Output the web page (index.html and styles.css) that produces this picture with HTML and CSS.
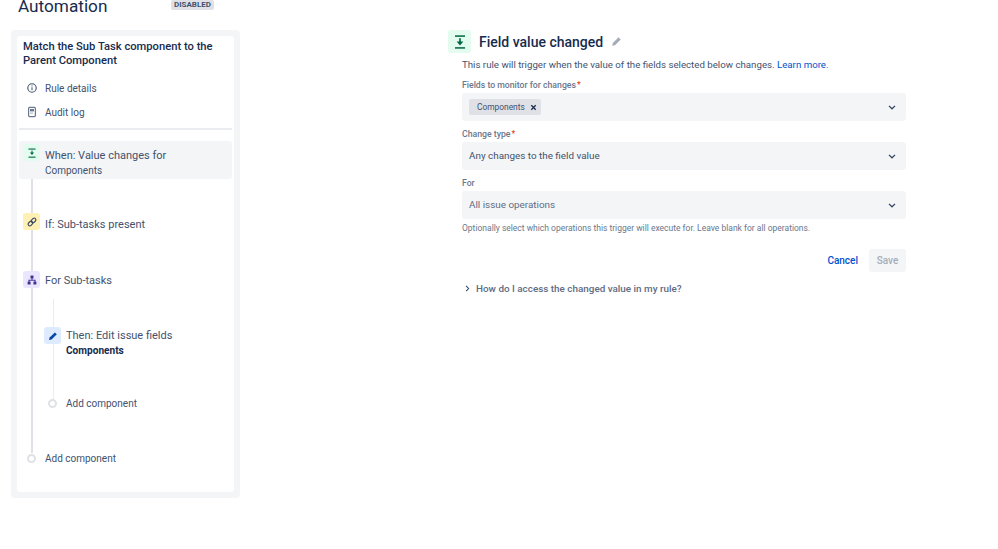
FILE: index.html
```html
<!DOCTYPE html>
<html lang="en">
<head>
<meta charset="utf-8">
<title>Automation</title>
<link rel="stylesheet" href="styles.css">
</head>
<body>
<div class="page">
  <aside class="left">
    <header class="head">
      <h1 class="head-title">Automation</h1>
      <span class="lozenge">DISABLED</span>
    </header>
    <div class="rail">
      <div class="card">
        <h2 class="rule-name">Match the Sub Task component to the Parent Component</h2>
        <div class="nav-row">
          <svg class="nav-icon" viewBox="0 0 12 12"><circle cx="6" cy="6" r="4.2" fill="none" stroke="#42526e" stroke-width="1.1"/><rect x="5.5" y="5.3" width="1" height="3" fill="#42526e"/><rect x="5.5" y="3.5" width="1" height="1" fill="#42526e"/></svg>
          <span>Rule details</span>
        </div>
        <div class="nav-row nav-row-audit">
          <svg class="nav-icon" viewBox="0 0 12 12"><rect x="2.6" y="1.4" width="6.8" height="9.2" rx="1" fill="none" stroke="#6b778c" stroke-width="1.2"/><rect x="4" y="3" width="4" height="2.4" fill="#6b778c"/><rect x="4" y="6.6" width="3" height="1" fill="#a5adba"/></svg>
          <span>Audit log</span>
        </div>
        <div class="divider"></div>
        <div class="flow">
          <div class="step step-when">
            <span class="tile tile-green">
              <svg viewBox="0 0 12 12"><rect x="2.5" y="1.5" width="7" height="1.1" fill="#006644"/><rect x="2.5" y="9.6" width="7" height="1.1" fill="#006644"/><path d="M5.5 3.4h1v2.2h1.6L6 8 3.9 5.6h1.6z" fill="#006644"/></svg>
            </span>
            <div class="step-text">
              <div>When: Value changes for</div>
              <div class="step-sub">Components</div>
            </div>
          </div>
          <div class="step step-if">
            <span class="tile tile-yellow">
              <svg viewBox="0 0 12 12"><g fill="none" stroke="#344563" stroke-width="1.1" transform="rotate(-45 6 6)"><rect x="1.2" y="4.3" width="5.2" height="3.4" rx="1.7"/><rect x="5.6" y="4.3" width="5.2" height="3.4" rx="1.7"/></g></svg>
            </span>
            <div class="step-text">If: Sub-tasks present</div>
          </div>
          <div class="step step-for">
            <span class="tile tile-purple">
              <svg viewBox="0 0 12 12"><g fill="#403294"><rect x="4.5" y="1.5" width="3" height="3" rx=".6"/><rect x="1.6" y="7.5" width="3" height="3" rx=".6"/><rect x="7.4" y="7.5" width="3" height="3" rx=".6"/><rect x="5.5" y="4.2" width="1" height="2"/><rect x="2.6" y="5.8" width="6.8" height=".9"/><rect x="2.6" y="5.8" width=".9" height="2"/><rect x="8.5" y="5.8" width=".9" height="2"/></g></svg>
            </span>
            <div class="step-text">For Sub-tasks</div>
          </div>
          <div class="branch">
            <div class="step step-then">
              <span class="tile tile-blue">
                <svg viewBox="0 0 12 12"><path d="M7.9 2.4l1.9 1.9-5.2 5.2-2.6.6.6-2.6z" fill="#0747a6"/></svg>
              </span>
              <div class="step-text">
                <div>Then: Edit issue fields</div>
                <div class="step-bold">Components</div>
              </div>
            </div>
            <div class="step step-add-inner">
              <span class="dot"></span>
              <div class="step-text">Add component</div>
            </div>
          </div>
          <div class="step step-add-outer">
            <span class="dot"></span>
            <div class="step-text">Add component</div>
          </div>
        </div>
      </div>
    </div>
  </aside>
  <main class="main">
    <div class="main-head">
      <span class="main-tile">
        <svg viewBox="0 0 24 24"><rect x="6" y="4" width="12" height="1.8" fill="#006644"/><rect x="6" y="18.2" width="12" height="1.8" fill="#006644"/><path d="M11 7.5h2v4h3l-4 4.6-4-4.6h3z" fill="#006644"/></svg>
      </span>
      <h2 class="main-title">Field value changed</h2>
      <svg class="pencil" viewBox="0 0 12 12"><path d="M8.2 1.4l2.4 2.4-6.2 6.2-3 .6.6-3z" fill="#a5adba"/></svg>
    </div>
    <div class="form">
      <p class="desc">This rule will trigger when the value of the fields selected below changes. <a class="link" href="#">Learn more.</a></p>
      <div class="label">Fields to monitor for changes<span class="req">*</span></div>
      <div class="select">
        <span class="tag">Components<svg class="tag-x" viewBox="0 0 8 8"><path d="M1.5 1.5l5 5M6.5 1.5l-5 5" stroke="#172b4d" stroke-width="1.5" fill="none"/></svg></span>
        <svg class="chev" viewBox="0 0 10 6"><path d="M1.2 1l3.8 3.6L8.8 1" fill="none" stroke="#344563" stroke-width="1.6"/></svg>
      </div>
      <div class="label">Change type<span class="req">*</span></div>
      <div class="select">
        <span class="value">Any changes to the field value</span>
        <svg class="chev" viewBox="0 0 10 6"><path d="M1.2 1l3.8 3.6L8.8 1" fill="none" stroke="#344563" stroke-width="1.6"/></svg>
      </div>
      <div class="label">For</div>
      <div class="select">
        <span class="value value-muted">All issue operations</span>
        <svg class="chev" viewBox="0 0 10 6"><path d="M1.2 1l3.8 3.6L8.8 1" fill="none" stroke="#344563" stroke-width="1.6"/></svg>
      </div>
      <p class="help">Optionally select which operations this trigger will execute for. Leave blank for all operations.</p>
      <div class="actions">
        <a class="cancel" href="#">Cancel</a>
        <span class="save">Save</span>
      </div>
      <div class="expander">
        <svg class="expander-icon" viewBox="0 0 6 10"><path d="M1 1.2L4.6 5 1 8.8" fill="none" stroke="#344563" stroke-width="1.5"/></svg>
        <span>How do I access the changed value in my rule?</span>
      </div>
    </div>
  </main>
</div>
</body>
</html>
```
FILE: styles.css
```css
* { box-sizing: border-box; }
html, body { margin: 0; padding: 0; background: #fff; }
body {
  font-family: Roboto, "Noto Sans", sans-serif;
  color: #42526e;
  font-size: 10px;
  overflow: hidden;
  height: 549px;
}
.page { display: flex; align-items: flex-start; }
.left { width: 229px; margin-left: 11px; flex: none; }
.head { height: 30px; display: flex; align-items: flex-start; }
.head-title {
  margin: 0 0 0 7px;
  width: 89px;
  font-size: 17.2px;
  line-height: 12px;
  font-weight: 400;
  color: #172b4d;
  flex: none;
}
.lozenge {
  margin: 0 0 0 64px;
  height: 10px;
  line-height: 10px;
  padding: 0 3px;
  background: #dfe1e6;
  border-radius: 2px;
  font-size: 8px;
  font-weight: 700;
  color: #42526e;
}
.rail { background: #f4f5f7; border-radius: 4px; padding: 6px; height: 468px; }
.card { background: #fff; border-radius: 3px; height: 456px; padding: 4px 2px 0; }
.rule-name {
  margin: 0 0 0 4px;
  font-size: 11.2px;
  line-height: 14px;
  font-weight: 500;
  color: #172b4d;
}
.nav-row { display: flex; align-items: center; height: 14px; margin: 13px 0 0 7px; gap: 7px; }
.nav-row-audit { margin-top: 10px; }
.nav-icon { width: 12px; height: 12px; flex: none; }
.divider { height: 2px; background: #ebecf0; margin-top: 9px; }
.flow { position: relative; margin-top: 11px; }
.flow::before {
  content: "";
  position: absolute;
  left: 12px;
  top: 20px;
  height: 292px;
  width: 1.5px;
  background: #dfe1e6;
}
.step { display: flex; position: relative; }
.step-when { height: 38px; background: #f4f5f7; border-radius: 3px; padding: 3px 0 0 4px; }
.step-when .step-text { padding-top: 4px; }
.step-if { margin-top: 34px; padding-left: 4px; }
.step-if .step-text { padding-top: 4px; }
.step-for { margin-top: 39px; padding-left: 4px; }
.step-for .step-text { padding-top: 2px; }
.branch { position: relative; margin: 39px 0 0 25px; }
.branch::before {
  content: "";
  position: absolute;
  left: 8.5px;
  top: -28px;
  height: 104px;
  width: 1.5px;
  background: #ebecf0;
}
.tile {
  width: 17px;
  height: 17px;
  flex: none;
  border-radius: 3px;
  display: flex;
  align-items: center;
  justify-content: center;
  position: relative;
  z-index: 1;
}
.tile svg { width: 12px; height: 12px; }
.tile-green { background: #e3fcef; }
.tile-yellow { background: #fff0b3; }
.tile-purple { background: #eae6ff; }
.tile-blue { background: #deebff; }
.step-text { margin-left: 5px; font-size: 11px; line-height: 15px; padding-top: 3px; color: #42526e; }
.step-then .step-text { padding-top: 1px; }
.step-sub { font-size: 10px; line-height: 15px; }
.step-bold { font-size: 10.1px; line-height: 16px; font-weight: 700; color: #172b4d; }
.dot {
  width: 9px;
  height: 9px;
  margin: 4px 4px 0 4px;
  border: 2px solid #dfe1e6;
  border-radius: 50%;
  background: #fff;
  position: relative;
  z-index: 1;
  flex: none;
}
.step-add-inner { margin-top: 36px; }
.step-add-inner .step-text { font-size: 10px; margin-left: 5px; padding-top: 1px; }
.step-add-outer { margin-top: 39px; padding-left: 4px; }
.step-add-outer .step-text { font-size: 10px; margin-left: 5px; padding-top: 1px; }
.main { margin-left: 208px; width: 458px; flex: none; padding-top: 30px; }
.main-head { display: flex; align-items: center; height: 23px; }
.main-tile {
  width: 23px;
  height: 23px;
  background: #e3fcef;
  border-radius: 3px;
  display: flex;
  align-items: center;
  justify-content: center;
}
.main-tile svg { width: 20px; height: 20px; }
.main-title { margin: 0 0 0 8px; font-size: 14px; font-weight: 500; color: #172b4d; }
.pencil { width: 11px; height: 11px; margin-left: 8px; }
.form { margin-left: 14px; width: 444px; }
.desc { margin: 5px 0 0; font-size: 9.7px; line-height: 14px; color: #42526e; }
.link { color: #0052cc; text-decoration: none; }
.label { margin-top: 6px; height: 15px; font-size: 8.7px; line-height: 14px; font-weight: 500; color: #6b778c; }
.req { color: #de350b; margin-left: 1px; font-weight: 400; }
.select {
  height: 28px;
  background: #f4f5f7;
  border-radius: 3px;
  display: flex;
  align-items: center;
  justify-content: space-between;
  padding: 0 10px 0 7px;
}
.select + .label { margin-top: 6px; }
.tag {
  display: flex;
  align-items: center;
  background: #dfe1e6;
  border-radius: 2px;
  height: 16px;
  padding: 0 4px 0 8px;
  font-size: 8.4px;
  color: #42526e;
}
.tag-x { width: 7px; height: 7px; margin-left: 5px; }
.value { font-size: 9.9px; color: #42526e; margin-bottom: 1px; }
.value-muted { color: #5e6c84; }
.chev { width: 8px; height: 5px; }
.help { margin: 2px 0 0; font-size: 8.5px; line-height: 14px; color: #6b778c; }
.actions { display: flex; justify-content: flex-end; align-items: center; margin-top: 14px; height: 23px; }
.cancel { color: #0052cc; text-decoration: none; font-size: 10px; font-weight: 500; }
.save {
  margin-left: 11px;
  width: 37px;
  height: 23px;
  background: #f4f5f7;
  border-radius: 3px;
  color: #a5adba;
  font-size: 10px;
  font-weight: 500;
  display: flex;
  align-items: center;
  justify-content: center;
}
.expander { display: flex; align-items: center; margin-top: 9px; height: 14px; padding-left: 3px; font-size: 9.9px; font-weight: 500; color: #5e6c84; }
.expander-icon { width: 5px; height: 7px; margin-right: 6px; }
```
